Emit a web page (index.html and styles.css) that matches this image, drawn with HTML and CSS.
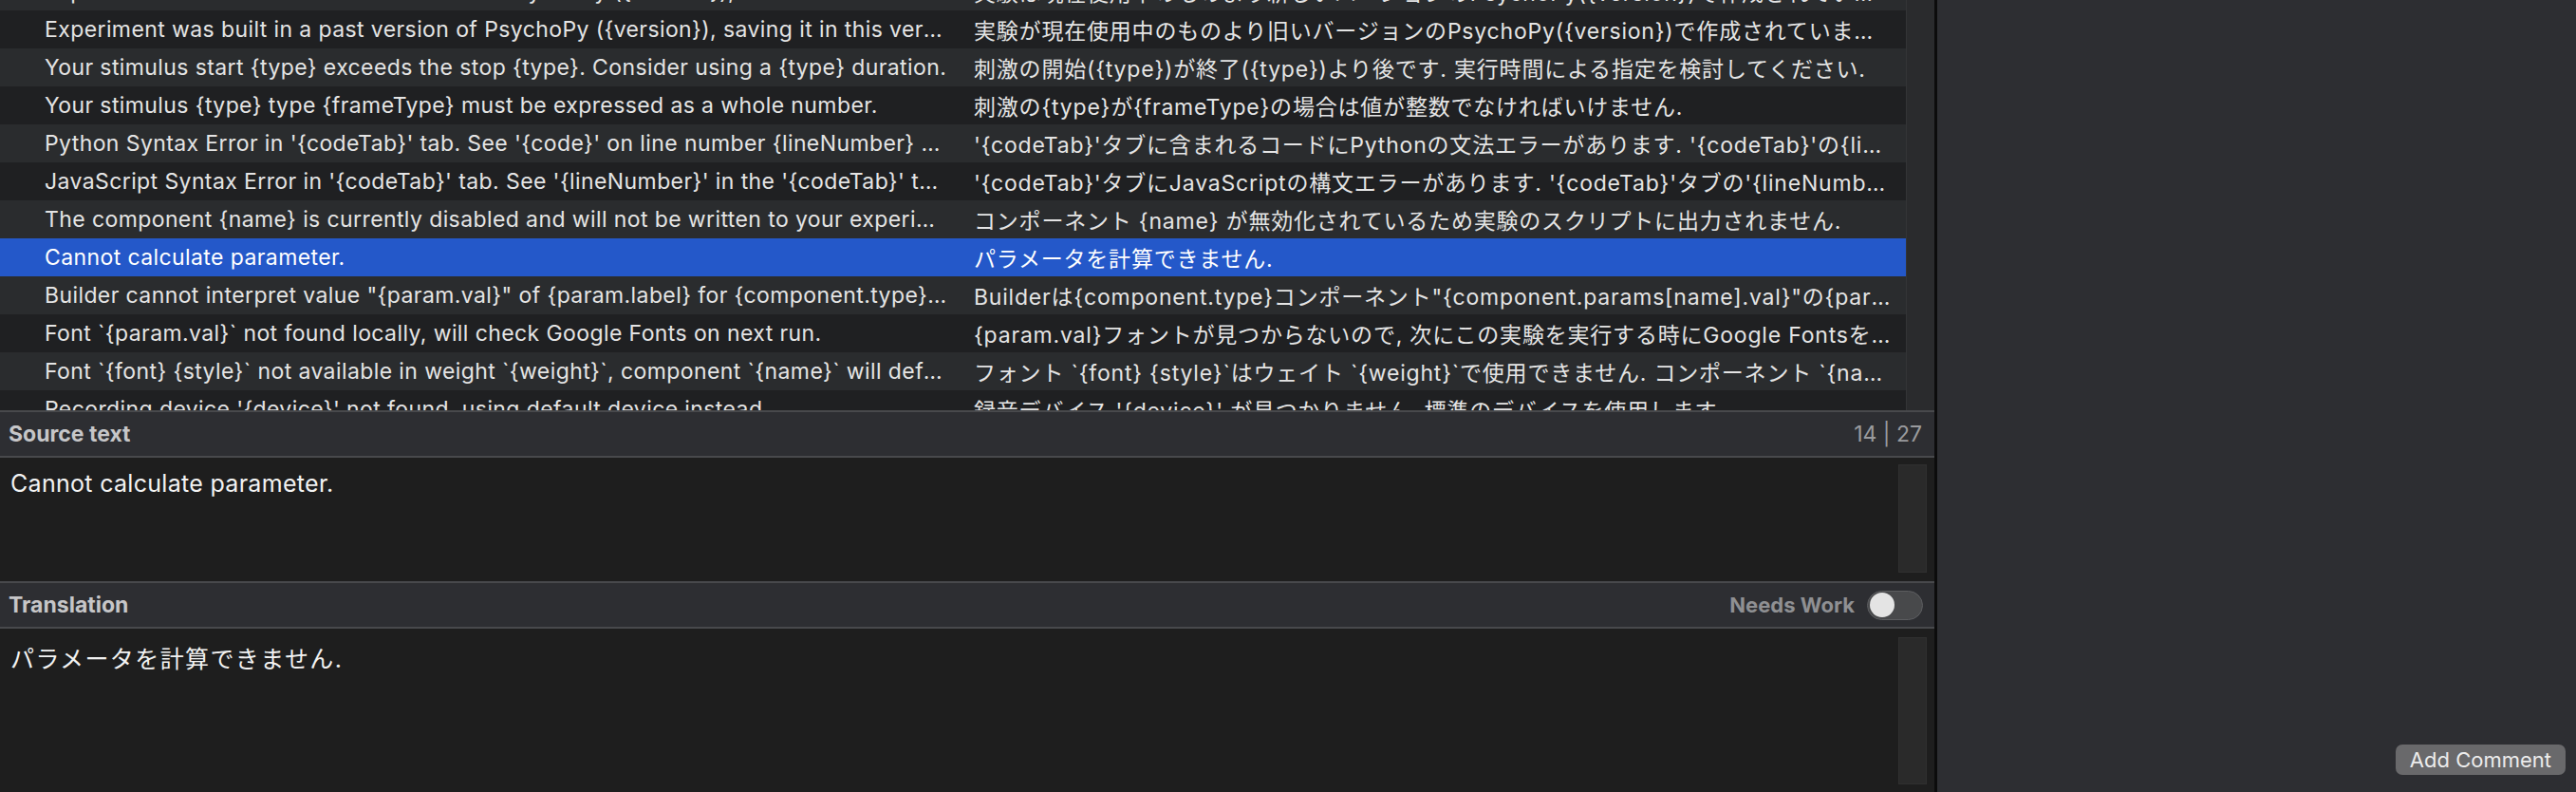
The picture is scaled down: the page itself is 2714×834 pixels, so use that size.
FILE: index.html
```html
<!DOCTYPE html>
<html lang="en">
<head>
    <meta charset="UTF-8">
    <title>Translation Editor</title>
    <link rel="stylesheet" href="styles.css">
</head>
<body>
    <div class="editor">
        <div class="list">
            <div class="rows">
                <div class="row light first"><span></span><div class="cell">Experiment was built in a future version of PsychoPy ({version}), we recommend upgrading to the latest version</div><div class="cell">実験は現在使用中のものより新しいバージョンのPsychoPy({version})で作成されています. 最新のバージョンへ</div></div>
                <div class="row"><span></span><div class="cell">Experiment was built in a past version of PsychoPy ({version}), saving it in this version may break compatibility</div><div class="cell">実験が現在使用中のものより旧いバージョンのPsychoPy({version})で作成されています. このバージョンで保存すると</div></div>
                <div class="row light"><span></span><div class="cell">Your stimulus start {type} exceeds the stop {type}. Consider using a {type} duration.</div><div class="cell">刺激の開始({type})が終了({type})より後です. 実行時間による指定を検討してください.</div></div>
                <div class="row"><span></span><div class="cell">Your stimulus {type} type {frameType} must be expressed as a whole number.</div><div class="cell">刺激の{type}が{frameType}の場合は値が整数でなければいけません.</div></div>
                <div class="row light"><span></span><div class="cell">Python Syntax Error in '{codeTab}' tab. See '{code}' on line number {lineNumber} of the '{codeTab}' tab.</div><div class="cell">'{codeTab}'タブに含まれるコードにPythonの文法エラーがあります. '{codeTab}'の{lineNumber}行目</div></div>
                <div class="row"><span></span><div class="cell">JavaScript Syntax Error in '{codeTab}' tab. See '{lineNumber}' in the '{codeTab}' tab.</div><div class="cell">'{codeTab}'タブにJavaScriptの構文エラーがあります. '{codeTab}'タブの'{lineNumber}'を確認</div></div>
                <div class="row light"><span></span><div class="cell">The component {name} is currently disabled and will not be written to your experiment script.</div><div class="cell">コンポーネント {name} が無効化されているため実験のスクリプトに出力されません.</div></div>
                <div class="row selected"><span></span><div class="cell">Cannot calculate parameter.</div><div class="cell">パラメータを計算できません.</div></div>
                <div class="row light"><span></span><div class="cell">Builder cannot interpret value "{param.val}" of {param.label} for {component.type} component "{name}".</div><div class="cell">Builderは{component.type}コンポーネント"{component.params[name].val}"の{param.label}の値を解釈できません</div></div>
                <div class="row"><span></span><div class="cell">Font `{param.val}` not found locally, will check Google Fonts on next run.</div><div class="cell">{param.val}フォントが見つからないので, 次にこの実験を実行する時にGoogle Fontsを確認します.</div></div>
                <div class="row light"><span></span><div class="cell">Font `{font} {style}` not available in weight `{weight}`, component `{name}` will default to Open Sans Regular.</div><div class="cell">フォント `{font} {style}`はウェイト `{weight}`で使用できません. コンポーネント `{name}`はOpen Sans</div></div>
                <div class="row"><span></span><div class="cell">Recording device '{device}' not found, using default device instead.</div><div class="cell">録音デバイス '{device}' が見つかりません. 標準のデバイスを使用します.</div></div>
            </div>
            <div class="track"></div>
        </div>
        <div class="bar">
            <span class="bar-title">Source text</span>
            <span class="counter">14 | 27</span>
        </div>
        <div class="pane source">
            <div class="pane-text">Cannot calculate parameter.</div>
            <div class="pane-scroll"></div>
        </div>
        <div class="bar">
            <span class="bar-title">Translation</span>
            <label class="needs-work">Needs Work <span class="toggle"><span class="knob"></span></span></label>
        </div>
        <div class="pane translation">
            <div class="pane-text">パラメータを計算できません.</div>
            <div class="pane-scroll"></div>
        </div>
    </div>
    <div class="side">
        <button type="button" class="add-comment">Add Comment</button>
    </div>
</body>
</html>
```

FILE: styles.css
```css
body {
    margin: 0;
    height: 834px;
    display: flex;
    background-color: #2d2e32;
    font-family: Inter, "Noto Sans CJK JP", sans-serif;
    color: #e4e4e4;
    overflow: hidden;
}
.editor {
    width: 2038px;
    display: flex;
    flex-direction: column;
    border-right: 3px solid #0c0c0c;
}
.list {
    height: 432px;
    display: flex;
    overflow: hidden;
}
.rows {
    flex: 1;
    overflow: hidden;
}
.row {
    height: 40px;
    display: grid;
    grid-template-columns: 34px 979px 1fr;
    align-items: center;
    background-color: #1f2022;
    font-size: 23px;
    letter-spacing: 0.4px;
}
.row.light {
    background-color: #2a2c2e;
}
.row.first {
    margin-top: -29px;
}
.row.selected {
    background-color: #2458c9;
    color: #fff;
}
.cell {
    padding: 0 13px;
    white-space: nowrap;
    overflow: hidden;
    text-overflow: ellipsis;
}
.cell:last-child {
    letter-spacing: 0.8px;
}
.track {
    width: 29px;
    background-color: #2a2b2d;
    border-left: 1px solid #333436;
}
.bar {
    height: 46px;
    display: flex;
    align-items: center;
    justify-content: space-between;
    padding: 0 12px 0 9px;
    background-color: #2d2e32;
    border-top: 2px solid #48494c;
    border-bottom: 2px solid #48494c;
}
.bar-title {
    font-size: 23px;
    font-weight: bold;
    color: #c6c6c8;
}
.counter {
    font-size: 23px;
    color: #9a9b9e;
    padding-right: 1px;
}
.needs-work {
    display: flex;
    align-items: center;
    gap: 13px;
    font-size: 22px;
    font-weight: bold;
    color: #8f9093;
}
.toggle {
    width: 53px;
    height: 29px;
    border: 1px solid #5c5d60;
    border-radius: 16px;
    background-color: #48494b;
    display: flex;
    align-items: center;
    padding: 0 2px;
    box-sizing: content-box;
}
.knob {
    width: 26px;
    height: 26px;
    border-radius: 50%;
    background-color: #e4e4e4;
}
.pane {
    display: flex;
    background-color: #1e1e1e;
}
.source {
    height: 130px;
}
.translation {
    flex: 1;
}
.pane-text {
    flex: 1;
    padding: 12px 11px;
    font-size: 25px;
    letter-spacing: 0.3px;
    color: #f2f2f2;
}
.translation .pane-text {
    letter-spacing: 1.4px;
}
.pane-scroll {
    width: 28px;
    margin: 7px 8px 9px 0;
    background-color: #2a2a2a;
    border: 1px solid #303030;
}
.translation .pane-scroll {
    margin-top: 9px;
    margin-bottom: 8px;
}
.side {
    flex: 1;
    display: flex;
    align-items: flex-end;
    justify-content: flex-end;
    padding: 0 11px 18px 0;
}
.add-comment {
    height: 32px;
    padding: 0 15px;
    border: none;
    border-radius: 7px;
    background-color: #69696b;
    color: #ececec;
    font-family: Inter, sans-serif;
    font-size: 22px;
    line-height: 32px;
}
```
